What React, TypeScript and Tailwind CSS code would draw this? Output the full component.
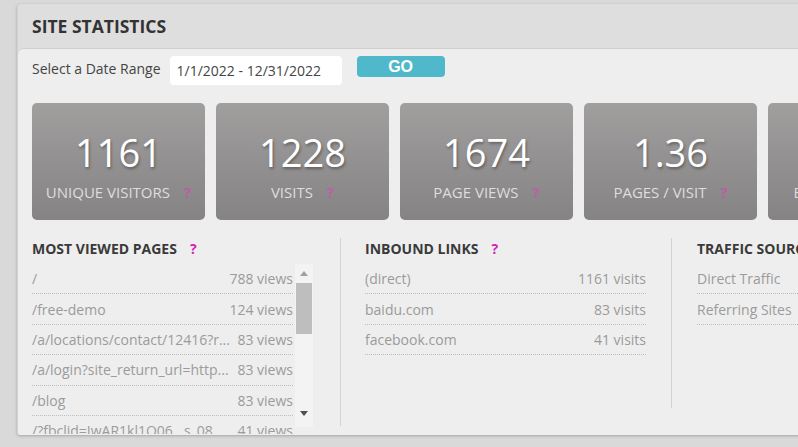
const stats = [
  { value: "1161", label: "UNIQUE VISITORS" },
  { value: "1228", label: "VISITS" },
  { value: "1674", label: "PAGE VIEWS" },
  { value: "1.36", label: "PAGES / VISIT" },
  { value: "84", label: "BOUNCE RATE" },
];

const pages = [
  { name: "/", count: "788 views" },
  { name: "/free-demo", count: "124 views" },
  { name: "/a/locations/contact/12416?r...", count: "83 views" },
  { name: "/a/login?site_return_url=http...", count: "83 views" },
  { name: "/blog", count: "83 views" },
  { name: "/?fbclid=IwAR1kl1Q06...s_08...", count: "41 views" },
];

const links = [
  { name: "(direct)", count: "1161 visits" },
  { name: "baidu.com", count: "83 visits" },
  { name: "facebook.com", count: "41 visits" },
];

const sources = [
  { name: "Direct Traffic", count: "1161 visits" },
  { name: "Referring Sites", count: "124 visits" },
];

function Help({ muted }: { muted?: boolean }) {
  return (
    <span className={muted ? "ml-[14px] font-bold text-[#bb5fa7]" : "ml-[13px] font-bold text-[#d325b5]"}>?</span>
  );
}

function Row({ name, count }: { name: string; count: string }) {
  return (
    <div className="flex h-[30.4px] items-center justify-between border-b border-dotted border-[#bdbdbd] text-[14px] text-[#9b9b9b]">
      <span className="overflow-hidden whitespace-nowrap pr-[8px]">{name}</span>
      <span className="shrink-0">{count}</span>
    </div>
  );
}

function Heading({ children }: { children: string }) {
  return (
    <div className="flex h-[20px] items-center text-[14px] font-bold text-[#3a3a3a]">
      {children}
      <Help />
    </div>
  );
}

export default function App() {
  return (
    <div className="h-[447px] w-[798px] overflow-hidden bg-[#d9d9d9] pt-[4px] pl-[17px] font-['Open_Sans',sans-serif]">
      <div className="h-[431px] w-[820px] overflow-hidden rounded-tl-[4px] rounded-bl-[3px] border-l border-[#d2d2d2] bg-[#dedede] shadow-[0_1px_3px_rgba(0,0,0,0.25)]">
        <div className="flex h-[44px] items-center px-[14px] text-[17.5px] font-bold text-[#333]">SITE STATISTICS</div>
        <div className="h-full rounded-tl-[6px] border-t border-[#cfcfcf] bg-[#eeeeee] px-[14px] pt-[7px]">
          <div className="flex items-start">
            <span className="mt-[2px] text-[14px] text-[#444]">Select a Date Range</span>
            <div className="ml-[9px] flex h-[29px] w-[172px] items-center rounded-[4px] bg-white px-[7px] text-[14px] text-[#444]">
              1/1/2022 - 12/31/2022
            </div>
            <button className="ml-[15px] h-[21px] w-[88px] rounded-[4px] bg-[#4fb8cb] font-['Liberation_Sans',sans-serif] text-[16px] font-bold leading-[21px] text-white">
              GO
            </button>
          </div>

          <div className="mt-[18px] flex gap-[11px]">
            {stats.map((s) => (
              <div
                key={s.label}
                className="flex h-[117px] w-[173px] shrink-0 flex-col items-center rounded-[5px] bg-gradient-to-b from-[#a19e9e] to-[#858384]"
              >
                <div className="mt-[24px] h-[50px] text-[38px] leading-[50px] text-white [text-shadow:1px_2px_3px_rgba(0,0,0,0.35)]">
                  {s.value}
                </div>
                <div className="mt-[4px] flex text-[15px] text-[#dedede]">
                  {s.label}
                  <Help muted />
                </div>
              </div>
            ))}
          </div>

          <div className="mt-[18px] flex">
            <div className="w-[281px] shrink-0">
              <Heading>MOST VIEWED PAGES</Heading>
              <div className="relative mt-[6px] h-[170px] overflow-hidden">
                <div className="w-[261px]">
                  {pages.map((p) => (
                    <Row key={p.name} {...p} />
                  ))}
                </div>
                <div className="absolute top-0 right-0 h-[163px] w-[18px] bg-[#f3f3f3]">
                  <svg className="absolute top-[7px] left-[5px]" width="8" height="5" viewBox="0 0 8 5">
                    <path d="M0 5 L4 0 L8 5 Z" fill="#a0a0a0" />
                  </svg>
                  <div className="absolute top-[19px] left-[1px] h-[51px] w-[16px] bg-[#bebebe]" />
                  <svg className="absolute top-[147px] left-[5px]" width="8" height="5" viewBox="0 0 8 5">
                    <path d="M0 0 L8 0 L4 5 Z" fill="#505050" />
                  </svg>
                </div>
              </div>
            </div>
            <div className="mr-[24px] ml-[27px] h-[188px] w-px shrink-0 bg-[#d2d2d2]" />
            <div className="w-[281px] shrink-0">
              <Heading>INBOUND LINKS</Heading>
              <div className="mt-[6px]">
                {links.map((p) => (
                  <Row key={p.name} {...p} />
                ))}
              </div>
            </div>
            <div className="mr-[25px] ml-[25px] h-[170px] w-px shrink-0 bg-[#d2d2d2]" />
            <div className="w-[281px] shrink-0">
              <Heading>TRAFFIC SOURCES</Heading>
              <div className="mt-[6px]">
                {sources.map((p) => (
                  <Row key={p.name} {...p} />
                ))}
              </div>
            </div>
          </div>
        </div>
      </div>
    </div>
  );
}
